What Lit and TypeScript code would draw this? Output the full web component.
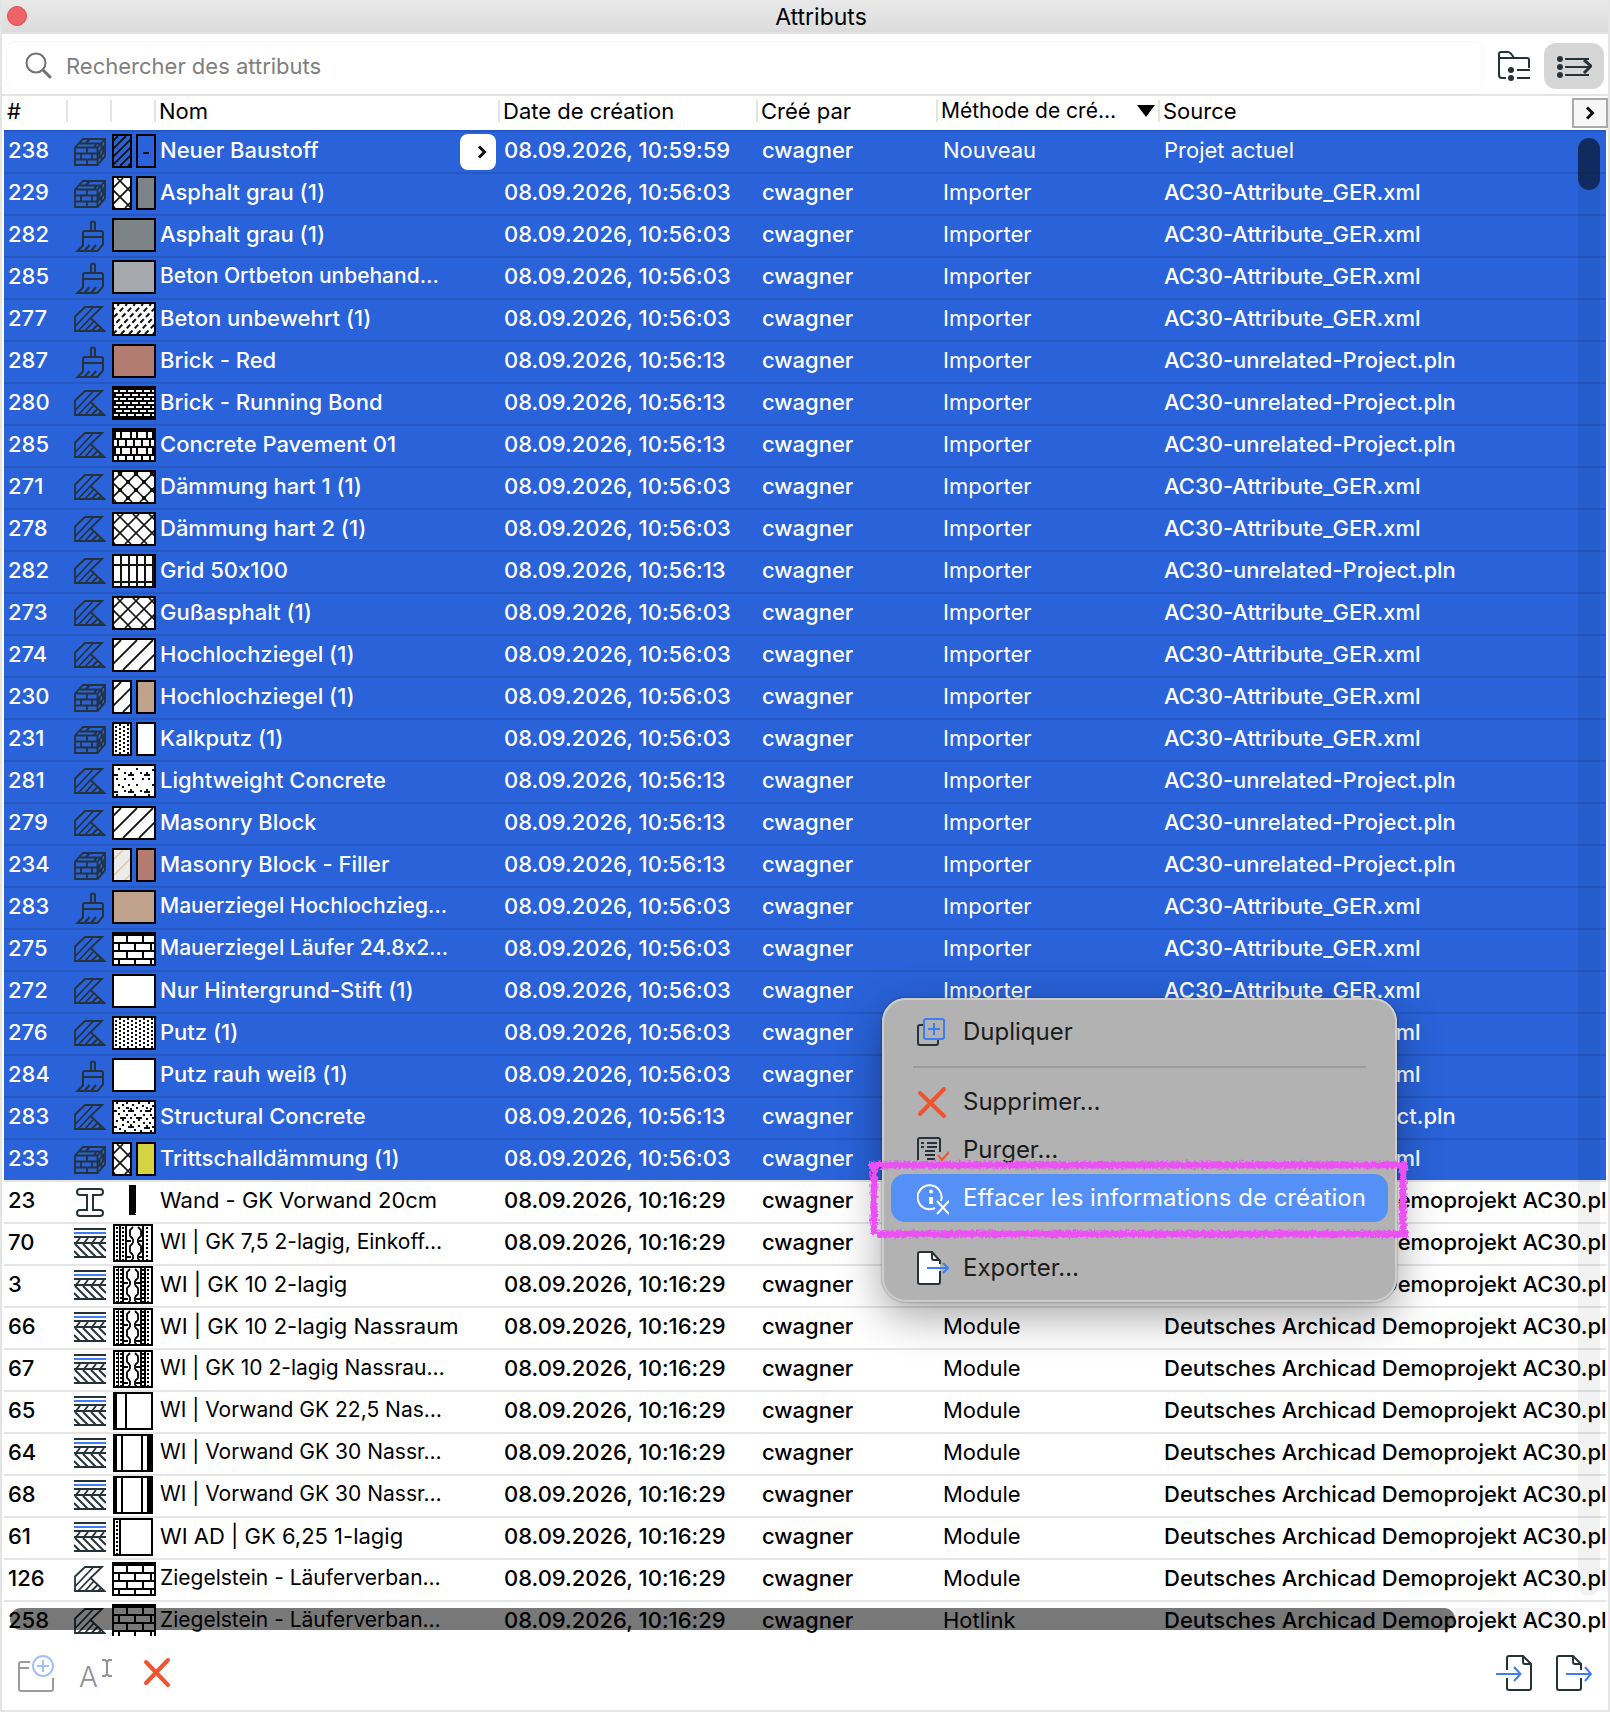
import { LitElement, html, svg, css, nothing } from "lit";
import { customElement, property, state } from "lit/decorators.js";

type Kind = "material" | "surface" | "fill" | "profile" | "composite";

interface Row {
  id: string;
  kind: Kind;
  swatch: string[];
  name: string;
  date: string;
  method: string;
  source: string;
  selected: boolean;
}

const GER = "AC30-Attribute_GER.xml";
const PLN = "AC30-unrelated-Project.pln";
const DEMO = "Deutsches Archicad Demoprojekt AC30.pln";
const T03 = "08.09.2026, 10:56:03";
const T13 = "08.09.2026, 10:56:13";
const T16 = "08.09.2026, 10:16:29";

const imported = (id: string, kind: Kind, swatch: string, name: string, fromProject = false): Row => ({
  id,
  kind,
  swatch: swatch.split(" "),
  name,
  date: fromProject ? T13 : T03,
  method: "Importer",
  source: fromProject ? PLN : GER,
  selected: true,
});

const linked = (id: string, kind: Kind, swatch: string, name: string, method = "Module"): Row => ({
  id,
  kind,
  swatch: [swatch],
  name,
  date: T16,
  method,
  source: DEMO,
  selected: false,
});

const ROWS: Row[] = [
  {
    id: "238",
    kind: "material",
    swatch: ["hatch", "dash"],
    name: "Neuer Baustoff",
    date: "08.09.2026, 10:59:59",
    method: "Nouveau",
    source: "Projet actuel",
    selected: true,
  },
  imported("229", "material", "cross #7d8488", "Asphalt grau (1)"),
  imported("282", "surface", "#7d8488", "Asphalt grau (1)"),
  imported("285", "surface", "#a5a8ad", "Beton Ortbeton unbehand…"),
  imported("277", "fill", "dashes", "Beton unbewehrt (1)"),
  imported("287", "surface", "#b27c70", "Brick - Red", true),
  imported("280", "fill", "running", "Brick - Running Bond", true),
  imported("285", "fill", "pavement", "Concrete Pavement 01", true),
  imported("271", "fill", "crossdot", "Dämmung hart 1 (1)"),
  imported("278", "fill", "cross", "Dämmung hart 2 (1)"),
  imported("282", "fill", "grid", "Grid 50x100", true),
  imported("273", "fill", "cross", "Gußasphalt (1)"),
  imported("274", "fill", "diagonal", "Hochlochziegel (1)"),
  imported("230", "material", "diagonal #c0a28d", "Hochlochziegel (1)"),
  imported("231", "material", "dots #ffffff", "Kalkputz (1)"),
  imported("281", "fill", "light", "Lightweight Concrete", true),
  imported("279", "fill", "diagonal", "Masonry Block", true),
  imported("234", "material", "faint #b27c70", "Masonry Block - Filler", true),
  imported("283", "surface", "#c0a28d", "Mauerziegel Hochlochzieg…"),
  imported("275", "fill", "bricks", "Mauerziegel Läufer 24.8x2…"),
  imported("272", "fill", "#ffffff", "Nur Hintergrund-Stift (1)"),
  imported("276", "fill", "dots", "Putz (1)"),
  imported("284", "surface", "#ffffff", "Putz rauh weiß (1)"),
  imported("283", "fill", "structural", "Structural Concrete", true),
  imported("233", "material", "cross #d3d344", "Trittschalldämmung (1)"),
  linked("23", "profile", "bar", "Wand - GK Vorwand 20cm"),
  linked("70", "composite", "wallA", "WI | GK 7,5 2-lagig, Einkoff…"),
  linked("3", "composite", "wallB", "WI | GK 10 2-lagig"),
  linked("66", "composite", "wallB", "WI | GK 10 2-lagig Nassraum"),
  linked("67", "composite", "wallB", "WI | GK 10 2-lagig Nassrau…"),
  linked("65", "composite", "wallC", "WI | Vorwand GK 22,5 Nas…"),
  linked("64", "composite", "wallD", "WI | Vorwand GK 30 Nassr…"),
  linked("68", "composite", "wallD", "WI | Vorwand GK 30 Nassr…"),
  linked("61", "composite", "wallE", "WI AD | GK 6,25 1-lagig"),
  linked("126", "fill", "bricks", "Ziegelstein - Läuferverban…"),
  linked("258", "fill", "bricks", "Ziegelstein - Läuferverban…", "Hotlink"),
];

/* Diagonals rising to the right: x + y = k */
const rising = (w: number, h: number, start: number, step: number) => {
  let d = "";
  for (let k = start; k < w + h; k += step) d += `M${k - h} ${h}L${k} 0`;
  return d;
};

/* Diagonals falling to the right: x - y = k */
const falling = (w: number, h: number, start: number, step: number) => {
  let d = "";
  for (let k = start; k > -h; k -= step) d += `M${k} 0L${k + h} ${h}`;
  for (let k = start + step; k < w; k += step) d += `M${k} 0L${k + h} ${h}`;
  return d;
};

const blocks = (cells: number[][]) =>
  cells.map(([x, y, w, h]) => `M${x} ${y}h${w}v${h}h${-w}z`).join("");

const dotGrid = (w: number, h: number) => {
  const cells: number[][] = [];
  for (let c = 0, x = 1; x < w; x += 4, c++)
    for (let y = c % 2 ? 0 : 2; y < h; y += 4) cells.push([x, y, 2, 2]);
  return blocks(cells);
};

const runningBond = (w: number, h: number, pw: number, ph: number, gap: number) => {
  const cells: number[][] = [];
  for (let r = 0, y = 2; y < h; y += ph, r++)
    for (let x = r % 2 ? -pw / 2 - 2 : -2; x < w; x += pw)
      cells.push([x, y, pw - gap, ph - 2]);
  return blocks(cells);
};

const pavement = () => {
  const cells: number[][] = [];
  for (let r = 0, y = 2; y < 30; y += 8, r++) {
    if (r % 2 === 0) {
      for (let x = -8; x < 40; x += 16) cells.push([x, y, 8, 6], [x + 10, y, 4, 6]);
    } else {
      for (let x = -3; x < 40; x += 8) cells.push([x, y, 6, 6]);
    }
  }
  return blocks(cells);
};

/* Soft insulation: stacked loops joined by short necks */
const loops = (x: number, top: number) => {
  let d = "";
  for (let y = top; y < 34; y += 16) {
    d += `M${x + 6} ${y}M${x + 11} ${y}l3 3v6l-3 3M${x + 6} ${y + 12}l-3-3v-6l3-3`;
    d += `M${x + 6} ${y + 12}v4M${x + 11} ${y + 12}v4`;
    d += `M${x} ${y + 14}h4M${x + 12} ${y + 14}h4`;
  }
  return d;
};

const dotted = (x: number) =>
  svg`<path d="M${x} 1V34" stroke="#000" stroke-width="2" stroke-dasharray="2 2" fill="none"/>`;

const pattern = (name: string, w: number, h: number) => {
  const paper = svg`<rect width=${w} height=${h} fill="#fff"/>`;
  const ink = svg`<rect width=${w} height=${h} fill="#000"/>`;
  const line = (d: string, width = 1.4, color = "#111") =>
    svg`<path d=${d} fill="none" stroke=${color} stroke-width=${width}/>`;
  const solid = (d: string, color = "#111") =>
    svg`<path d=${d} fill=${color} shape-rendering="crispEdges"/>`;
  const soft = (d: string) =>
    svg`<path d=${d} fill="none" stroke="#000" stroke-width="1.8"/>`;
  switch (name) {
    case "hatch":
      return line(rising(w, h, 4, 8), 1.8);
    case "dash":
      return solid("M5 16h6v2h-6z");
    case "cross":
      return svg`${paper}${line(rising(w, h, 9, 16) + falling(w, h, 3, 16), 1.6)}`;
    case "crossdot": {
      const knots: number[][] = [];
      for (const [ox, oy] of [[6, 2], [14, 10]])
        for (let x = ox; x < w; x += 16)
          for (let y = oy; y < h; y += 16) knots.push([x - 2, y - 2, 4, 4]);
      return svg`${paper}${line(rising(w, h, 8, 16) + falling(w, h, 4, 16), 1.6)}${solid(blocks(knots))}`;
    }
    case "diagonal":
      return svg`${paper}${line(rising(w, h, 7, 16), 1.8)}`;
    case "faint":
      return svg`<rect width=${w} height=${h} fill="#ececec"/>${line(rising(w, h, 9, 16), 1.6, "#e5c9a4")}`;
    case "dashes":
      return svg`${paper}<path d=${rising(w, h, 5, 8)} fill="none" stroke="#111" stroke-width="2" stroke-dasharray="5 3"/>`;
    case "running":
      return svg`${ink}${solid(runningBond(w, h, 8, 4, 2), "#fff")}`;
    case "bricks":
      return svg`${ink}${solid(runningBond(w, h, 16, 8, 2), "#fff")}`;
    case "pavement":
      return svg`${ink}${solid(pavement(), "#fff")}`;
    case "grid":
      return svg`${paper}${solid("M6 0h2v30h-2zM14 0h2v30h-2zM22 0h2v30h-2zM30 0h2v30h-2zM38 0h2v30h-2zM0 8h40v2h-40zM0 25h40v2h-40z")}`;
    case "dots":
      return svg`${paper}${solid(dotGrid(w, h))}`;
    case "light":
      return svg`${paper}${solid(
        blocks([
          [4, 2, 2, 2], [22, 2, 2, 2], [38, 3, 2, 2], [10, 6, 2, 2], [26, 6, 2, 2],
          [0, 8, 4, 2], [14, 8, 6, 2], [16, 6, 2, 2], [30, 8, 6, 2], [32, 6, 2, 2],
          [10, 12, 2, 2], [18, 12, 2, 2], [28, 12, 2, 2], [34, 12, 2, 2], [2, 12, 2, 2],
          [4, 18, 2, 2], [14, 18, 2, 2], [22, 18, 2, 2], [38, 18, 2, 2], [8, 20, 2, 2],
          [0, 25, 4, 2], [14, 25, 6, 2], [16, 23, 2, 2], [30, 25, 6, 2], [32, 23, 2, 2],
          [10, 24, 2, 2], [26, 24, 2, 2], [2, 28, 2, 2], [20, 28, 2, 2], [34, 28, 2, 2],
        ])
      )}`;
    case "structural":
      return svg`${paper}${solid(
        blocks([
          [2, 0, 2, 2], [8, 2, 2, 2], [12, 0, 2, 2], [18, 2, 2, 2], [24, 0, 2, 2], [28, 3, 2, 2], [34, 0, 2, 2], [38, 3, 2, 2],
          [4, 5, 2, 2], [12, 5, 3, 2], [22, 5, 2, 2], [32, 5, 2, 2],
          [0, 8, 3, 2], [14, 8, 6, 2], [16, 6, 2, 2], [9, 8, 2, 2], [26, 8, 2, 2], [31, 8, 6, 2], [36, 6, 2, 2],
          [4, 11, 2, 2], [12, 12, 2, 2], [20, 12, 2, 2], [29, 12, 2, 2], [36, 12, 2, 2],
          [6, 15, 6, 2], [8, 17, 2, 2], [16, 15, 2, 2], [22, 15, 6, 2], [24, 17, 2, 2], [32, 16, 2, 2], [38, 15, 2, 2],
          [2, 18, 2, 2], [13, 19, 2, 2], [19, 19, 2, 2], [29, 20, 2, 2], [35, 20, 2, 2],
          [0, 24, 3, 2], [14, 24, 6, 2], [16, 22, 2, 2], [8, 22, 2, 2], [24, 23, 2, 2], [30, 25, 6, 2], [32, 23, 2, 2], [38, 24, 2, 2],
          [5, 26, 2, 2], [10, 28, 2, 2], [20, 27, 2, 2], [26, 28, 2, 2], [36, 28, 2, 2],
        ])
      )}`;
    case "wallA":
      return svg`${paper}${dotted(2)}${dotted(8)}${dotted(32)}${solid("M4 0h2v34h-2zM10 0h2v34h-2zM27 0h2v34h-2z", "#000")}${soft(loops(12, 1))}`;
    case "wallB":
      return svg`${paper}${dotted(2)}${dotted(6)}${dotted(28)}${dotted(33)}${solid("M3 0h1v34h-1zM7 0h2v34h-2zM25 0h2v34h-2zM29 0h2v34h-2z", "#000")}${soft(loops(9, 1))}`;
    case "wallC":
      return svg`${paper}${solid("M0 0h2v34h-2zM10 0h2v34h-2z", "#000")}`;
    case "wallD":
      return svg`${paper}${solid("M0 0h2v34h-2zM6 0h2v34h-2zM26 0h2v34h-2zM32 0h4v34h-4z", "#000")}`;
    case "wallE":
      return svg`${paper}${dotted(2)}${solid("M4 0h2v34h-2z", "#000")}`;
    default:
      return svg`<rect width=${w} height=${h} fill=${name}/>`;
  }
};

const swatch = (row: Row) => {
  if (row.kind === "profile")
    return html`<svg class="plain" width="44" height="40" viewBox="0 0 44 40" aria-hidden="true">
      <path d="M17 3h7v28h-1v1h1v1h-7z" fill="#000" />
    </svg>`;
  if (row.kind === "composite")
    return html`<span class="swatches"
      ><svg class="swatch wall" width="36" height="34" viewBox="0 0 36 34" aria-hidden="true">
        ${pattern(row.swatch[0], 36, 34)}
      </svg></span
    >`;
  const w = row.swatch.length > 1 ? 16 : 40;
  return html`<span class="swatches"
    >${row.swatch.map(
      (s) => html`<svg class="swatch" width=${w} height="30" viewBox="0 0 ${w} 30" aria-hidden="true">${pattern(s, w, 30)}</svg>`
    )}</span
  >`;
};

/* Type icons share a 32×40 box, the free height of a row */
const kindShape = {
  material: svg`<path stroke-width="1.8" d="M1 15.500 9 7h22v17.500L23.500 33H1zM1 15.500h22.500V33M23.500 15.500 31 7M1 21.500h22.500L31 13M1 27.500h22.500L31 19M13 15.500v6M7 21.500v6M18 21.500v6M13 27.500V33M5.500 11.500h21M16 7l-4 4M23 11.500l-3.500 4M27.500 11.500v6M25.500 19v6M29 15.500v5.500M27.500 23v5"/>`,
  surface: svg`<path d="M17 15V7.500a2 2 0 0 1 4 0V15M9 21v-4a2 2 0 0 1 2-2h16a2 2 0 0 1 2 2v11.500L23.500 35H3.500L9 29.500zM9 21h20M10.500 35l5-6M17 35l5-6"/>`,
  fill: svg`<path stroke-width="1.800" d="M1 31V16.500L11 7h17L16.500 18 30.500 31zM1 26.500 19.500 7M4 31l12.500-13M11 31l8.500-9.500M17.500 31l6-6M24 31l3-3"/>`,
  profile: svg`<path d="M6 7h20a3 3 0 0 1 0 6h-7v15h7a3 3 0 0 1 0 6H6a3 3 0 0 1 0-6h7V13H6a3 3 0 0 1 0-6z"/>`,
  composite: svg`<path d="M0 5h32M0 13h32M0 19h32M0 33h32M2 19l4-5M10 19l4-5M18 19l4-5M26 19l4-5M1 20l13 13M9 20l13 13M17 20l13 13M25 20l7 7M0 27l6 6"/><path d="M0 9h32" stroke="#3f7bf2"/>`,
};

const kindLabel: Record<Kind, string> = {
  material: "Matériau de construction",
  surface: "Surface",
  fill: "Hachure",
  profile: "Profil",
  composite: "Composite",
};

const chevron = html`<svg width="10" height="14" viewBox="0 0 10 14" aria-hidden="true">
  <path d="m2 1.500 5.500 5.500L2 12.500" fill="none" stroke="#111" stroke-width="3" />
</svg>`;

const crossIcon = svg`<path d="m2 5 22 23M24 3 2 26" stroke="#f0532d" stroke-width="4" stroke-linecap="round"/>`;

@customElement("attr-context-menu")
class AttrContextMenu extends LitElement {
  static styles = css`
    :host {
      display: block;
      box-sizing: border-box;
      padding: 10px 9px;
      border-radius: 24px;
      background: #b2b2b2;
      box-shadow:
        inset 0 0 0 2px #cdcdcd,
        0 0 2px rgba(0, 0, 0, 0.5),
        0 14px 44px rgba(0, 0, 0, 0.36);
    }
    .item {
      display: flex;
      align-items: center;
      gap: 14px;
      width: 100%;
      height: 48px;
      padding: 0 0 0 26px;
      border: 0;
      border-radius: 14px;
      background: none;
      color: #1c1c1c;
      font: 400 24px/28px Inter, "Liberation Sans", sans-serif;
      text-align: left;
      white-space: nowrap;
    }
    .item svg {
      flex: none;
    }
    .active {
      background: #5590f6;
      color: #fff;
    }
    .rule {
      height: 2px;
      margin: 10px 22px;
      border: 0;
      background: #9c9c9c;
    }
    .gap {
      height: 22px;
    }
  `;

  render() {
    const box = (shape: unknown) =>
      html`<svg width="32" height="36" viewBox="0 0 32 36" fill="none" stroke="#26323a" stroke-width="2" aria-hidden="true">${shape}</svg>`;
    return html`
      <button class="item" role="menuitem">
        ${box(svg`<path d="M6 11H3a2 2 0 0 0-2 2v16a2 2 0 0 0 2 2h16a2 2 0 0 0 2-2v-3"/><g stroke="#3f7bf2"><rect x="7" y="5" width="20" height="20" rx="2"/><path d="M11 15h12M17 9v12"/></g>`)}
        Dupliquer
      </button>
      <hr class="rule" />
      <button class="item" role="menuitem">
        ${box(svg`<path d="m3 9 24 23M27 5 3 30" stroke="#f0532d" stroke-width="4" stroke-linecap="round"/>`)}
        Supprimer…
      </button>
      <button class="item" role="menuitem">
        ${box(svg`<path d="M1 28V8a2 2 0 0 1 2-2h18a2 2 0 0 1 2 2v12M4 11h3M10 11h10M4 15h3M10 15h10M8 19h10M8 23h10M10 27h8"/><path d="m21 23 4 5 7-8" stroke="#f0532d"/>`)}
        Purger…
      </button>
      <button class="item active" role="menuitem">
        ${box(svg`<g stroke="#fff"><path d="M24 21A12 12 0 1 0 18 28"/><circle cx="14" cy="11.500" r="1" fill="#fff"/><path d="M14 17v7" stroke-width="4"/><path d="m20 21 12 13M32 21 20 34"/></g>`)}
        Effacer les informations de création
      </button>
      <div class="gap"></div>
      <button class="item" role="menuitem">
        ${box(svg`<path d="M23 14V11l-8-9H3a2 2 0 0 0-2 2v28a2 2 0 0 0 2 2h18a2 2 0 0 0 2-2V21" fill="#fff"/><path d="M15 2v6a2 2 0 0 0 2 2h6"/><path d="M10 18h21M26 13l5 5-5 5" stroke="#3f7bf2"/>`)}
        Exporter…
      </button>
    `;
  }
}

@customElement("attr-table")
class AttrTable extends LitElement {
  @property({ attribute: false }) rows: Row[] = [];

  static styles = css`
    :host {
      display: block;
      min-height: 0;
      overflow: hidden;
      position: relative;
      background: #fff;
      color: #000;
      font: 400 22px/36px Inter, "Liberation Sans", sans-serif;
      font-feature-settings: "calt" 0;
    }
    .frame {
      height: 100%;
      margin: 0 2px;
      overflow: hidden;
    }
    table {
      width: 100%;
      border-collapse: separate;
      border-spacing: 0;
      table-layout: fixed;
    }
    .c-id { width: 64px; }
    .c-kind { width: 44px; }
    .c-swatch { width: 44px; }
    .c-name { width: 344px; }
    .c-date { width: 258px; }
    .c-by { width: 180px; }
    .c-method { width: 222px; }
    th {
      height: 34px;
      padding: 0;
      border-bottom: 2px solid #2458c4;
      font-weight: 400;
      text-align: left;
    }
    .head {
      display: flex;
      align-items: center;
      justify-content: space-between;
      box-sizing: border-box;
      width: 100%;
      height: 22px;
      margin: 2px 0 6px;
      padding: 0 3px;
      border: 0;
      border-right: 2px solid #e4e4e4;
      background: none;
      color: inherit;
      font: inherit;
      line-height: 22px;
      white-space: nowrap;
    }
    .head.last {
      border-right: 0;
    }
    .head.cut,
    .cut {
      font-size: 21px;
    }
    td {
      height: 40px;
      padding: 0 0 0 4px;
      border-bottom: 2px solid #e4e4e4;
      overflow: hidden;
      vertical-align: top;
      white-space: nowrap;
      font-weight: 500;
    }
    td.name {
      font-weight: 400;
    }
    .selected td {
      border-color: #2558c3;
      background: #2962d9;
      color: #fff;
      font-weight: 500;
    }
    .edge td {
      border-color: #e4e4e4;
    }
    td.kind {
      padding: 0 0 0 6px;
    }
    td.sample {
      padding: 0;
    }
    td.method {
      padding-left: 5px;
    }
    tr td.method,
    .fresh td.source {
      font-weight: 400;
    }
    .kind svg,
    .plain {
      display: block;
    }
    .swatches {
      display: flex;
      gap: 4px;
    }
    .swatch {
      flex: none;
      margin-top: 2px;
      border: 2px solid #000;
    }
    .wall {
      margin: 0 0 0 1px;
    }
    .name-line {
      display: flex;
      justify-content: space-between;
      align-items: flex-start;
    }
    .open {
      display: flex;
      align-items: center;
      justify-content: flex-end;
      width: 36px;
      height: 36px;
      margin: 2px 4px 0 0;
      padding: 0 9px 0 0;
      border: 0;
      border-radius: 8px;
      background: #fff;
    }
    .more {
      position: absolute;
      top: 2px;
      right: 0;
      display: flex;
      align-items: center;
      justify-content: center;
      width: 36px;
      height: 30px;
      padding: 0;
      border: 2px solid #aaa;
      background: #f7f7f7;
    }
    .track,
    .thumb {
      position: absolute;
      border-radius: 11px;
      background: rgba(0, 0, 0, 0.05);
    }
    .thumb {
      background: rgba(0, 0, 0, 0.53);
    }
    .track.v {
      top: 42px;
      right: 8px;
      bottom: 40px;
      width: 22px;
    }
    .thumb.v {
      top: 42px;
      right: 8px;
      width: 22px;
      height: 52px;
    }
    .thumb.h {
      left: 8px;
      right: 153px;
      bottom: 6px;
      height: 22px;
    }
    .track.rest {
      right: 44px;
      bottom: 6px;
      width: 109px;
      height: 22px;
      border-radius: 0 11px 11px 0;
    }
  `;

  private row(r: Row, i: number) {
    const next = this.rows[i + 1];
    const cls = [r.selected ? "selected" : "", r.selected && next && !next.selected ? "edge" : "", i === 0 ? "fresh" : ""].join(" ");
    return html`<tr class=${cls} aria-selected=${r.selected ? "true" : "false"}>
      <td>${r.id}</td>
      <td class="kind">
        <svg width="32" height="40" viewBox="0 0 32 40" fill="none" stroke="#26323a" stroke-width="2" role="img" aria-label=${kindLabel[r.kind]}>
          ${kindShape[r.kind]}
        </svg>
      </td>
      <td class="sample">${swatch(r)}</td>
      <td class="name">
        <div class="name-line">
          <span class=${r.name.endsWith("…") ? "cut" : ""}>${r.name}</span>
          ${i === 0 ? html`<button class="open" aria-label="Ouvrir">${chevron}</button>` : nothing}
        </div>
      </td>
      <td>${r.date}</td>
      <td>cwagner</td>
      <td class="method">${r.method}</td>
      <td class="source">${r.source}</td>
    </tr>`;
  }

  render() {
    return html`
      <div class="frame">
        <table>
          <colgroup>
            <col class="c-id" /><col class="c-kind" /><col class="c-swatch" /><col class="c-name" />
            <col class="c-date" /><col class="c-by" /><col class="c-method" /><col />
          </colgroup>
          <thead>
            <tr>
              <th><button class="head">#</button></th>
              <th><span class="head"></span></th>
              <th><span class="head"></span></th>
              <th><button class="head">Nom</button></th>
              <th><button class="head">Date de création</button></th>
              <th><button class="head">Créé par</button></th>
              <th aria-sort="descending">
                <button class="head cut">
                  Méthode de cré…
                  <svg width="18" height="12" viewBox="0 0 18 12" aria-hidden="true"><path d="M0 0h18L9 12z" /></svg>
                </button>
              </th>
              <th><button class="head last">Source</button></th>
            </tr>
          </thead>
          <tbody>
            ${this.rows.map((r, i) => this.row(r, i))}
          </tbody>
        </table>
      </div>
      <button class="more" aria-label="Colonnes">${chevron}</button>
      <div class="track v"></div>
      <div class="thumb v"></div>
      <div class="track rest"></div>
      <div class="thumb h"></div>
    `;
  }
}

@customElement("app-root")
class AppRoot extends LitElement {
  @state() private rows = ROWS;

  static styles = css`
    :host {
      position: relative;
      display: flex;
      flex-direction: column;
      box-sizing: border-box;
      height: 100vh;
      border: 2px solid #e4e4e4;
      border-top: 0;
      background: #fff;
      overflow: hidden;
      font: 400 22px/28px Inter, "Liberation Sans", sans-serif;
    }
    .title {
      display: grid;
      grid-template-columns: 1fr auto 1fr;
      align-items: end;
      box-sizing: border-box;
      height: 34px;
      border-bottom: 2px solid #e2e2e2;
      background: linear-gradient(#e9e9e9, #dcdcdc);
      color: #000;
    }
    .title h1 {
      margin: 0 0 0 32px;
      font: inherit;
      font-size: 23px;
      line-height: 30px;
    }
    .close {
      width: 20px;
      height: 20px;
      margin: 0 0 6px 5px;
      padding: 0;
      border: 1px solid #e2484a;
      border-radius: 50%;
      background: #ef6567;
    }
    .search {
      display: flex;
      align-items: center;
      box-sizing: border-box;
      height: 62px;
      padding: 4px 4px 0;
      border-bottom: 2px solid #e4e4e4;
    }
    .field {
      display: flex;
      flex: 1;
      align-items: center;
      gap: 13px;
      height: 48px;
      padding-left: 18px;
      border: 1px solid #f7f7f7;
      border-radius: 10px;
    }
    .field input {
      flex: 1;
      min-width: 0;
      padding: 0;
      border: 0;
      outline: 0;
      background: none;
      font: inherit;
    }
    .field input::placeholder {
      color: #808080;
      opacity: 1;
    }
    .tool {
      display: flex;
      align-items: center;
      justify-content: center;
      width: 60px;
      height: 46px;
      padding: 0;
      border: 0;
      border-radius: 12px;
      background: none;
    }
    .tool.on {
      background: #d6d6d6;
    }
    attr-table {
      flex: 1;
    }
    .bottom {
      display: flex;
      align-items: center;
      gap: 24px;
      height: 74px;
      padding: 0 16px;
    }
    .bottom button {
      display: flex;
      padding: 0;
      border: 0;
      background: none;
    }
    .spacer {
      flex: 1;
    }
    .menu {
      position: absolute;
      top: 998px;
      left: 880px;
      width: 515px;
    }
    .marker {
      position: absolute;
      top: 1154px;
      left: 862px;
      pointer-events: none;
    }
  `;

  render() {
    return html`
      <header class="title">
        <button class="close" aria-label="Fermer"></button>
        <h1>Attributs</h1>
      </header>
      <div class="search">
        <label class="field">
          <svg width="28" height="30" viewBox="0 0 28 30" fill="none" stroke="#707070" stroke-width="2" aria-hidden="true">
            <circle cx="11" cy="12" r="9.500" />
            <path d="m18 19 7 7" stroke-width="3" stroke-linecap="round" />
          </svg>
          <input type="search" placeholder="Rechercher des attributs" aria-label="Rechercher des attributs" />
        </label>
        <button class="tool" aria-label="Affichage par dossiers">
          <svg width="32" height="32" viewBox="0 0 32 32" fill="none" stroke="#26323a" stroke-width="2" aria-hidden="true">
            <path d="M8 28H4a3 3 0 0 1-3-3V4a2 2 0 0 1 2-2h7c2 0 3 1 6 6h13a2 2 0 0 1 2 2v8M1 8h15M19 20h13M19 28h13" />
            <g fill="#26323a" stroke="none"><circle cx="13" cy="20" r="3" /><circle cx="13" cy="28" r="3" /></g>
          </svg>
        </button>
        <button class="tool on" aria-label="Affichage en liste" aria-pressed="true">
          <svg width="36" height="24" viewBox="0 0 36 24" fill="none" stroke="#26323a" stroke-width="2" aria-hidden="true">
            <path d="M9 5h24M9 13h25M9 21h24" />
            <path d="m28 6 7 6-7 7" stroke-width="3" />
            <g fill="#26323a" stroke="none"><circle cx="4" cy="5" r="3" /><circle cx="4" cy="13" r="3" /><circle cx="4" cy="21" r="3" /></g>
          </svg>
        </button>
      </div>
      <attr-table .rows=${this.rows}></attr-table>
      <footer class="bottom">
        <button aria-label="Nouveau dossier">
          <svg width="36" height="38" viewBox="0 0 36 38" fill="none" stroke="#999d9f" stroke-width="2" aria-hidden="true">
            <path d="M12 8H3a2 2 0 0 0-2 2v25a2 2 0 0 0 2 2h30a2 2 0 0 0 2-2V24M1 14h10" />
            <g stroke="#a3c0fb"><circle cx="25" cy="12" r="10" /><path d="M19 12h12M25 6v12" /></g>
          </svg>
        </button>
        <button aria-label="Renommer">
          <svg width="36" height="44" viewBox="0 -3 36 44" aria-hidden="true">
            <text x="1" y="33" fill="#8d9193" font-family="Inter, sans-serif" font-size="28" font-weight="300">A</text>
            <path d="M24 6h3l2 2 2-2h3M29 8v12M24 22h3l2-2 2 2h3" fill="none" stroke="#8d9193" stroke-width="2" />
          </svg>
        </button>
        <button aria-label="Supprimer">
          <svg width="44" height="32" viewBox="-6 0 44 32" fill="none" aria-hidden="true">${crossIcon}</svg>
        </button>
        <span class="spacer"></span>
        <button aria-label="Importer">
          <svg width="36" height="38" viewBox="0 0 36 38" fill="none" stroke="#26323a" stroke-width="2" aria-hidden="true">
            <path d="M11 16V4a2 2 0 0 1 2-2h14l8 8v24a2 2 0 0 1-2 2H13a2 2 0 0 1-2-2V24M27 2v6a2 2 0 0 0 2 2h6" />
            <path d="M0 20h24M18 13l6.500 7-6.500 7" stroke="#3f7bf2" />
          </svg>
        </button>
        <button aria-label="Exporter">
          <svg width="36" height="38" viewBox="0 0 36 38" fill="none" stroke="#26323a" stroke-width="2" aria-hidden="true">
            <path d="M25 16v-6l-8-8H3a2 2 0 0 0-2 2v30a2 2 0 0 0 2 2h20a2 2 0 0 0 2-2V24M17 2v6a2 2 0 0 0 2 2h6" />
            <path d="M10 20h25M29 13l6 7-6 7" stroke="#3f7bf2" />
          </svg>
        </button>
      </footer>
      <attr-context-menu class="menu" role="menu"></attr-context-menu>
      <svg class="marker" width="550" height="90" viewBox="0 0 550 90" aria-hidden="true">
        <filter id="crayon" x="-5%" y="-10%" width="110%" height="120%">
          <feTurbulence type="fractalNoise" baseFrequency="0.4" numOctaves="2" seed="4" result="n" />
          <feDisplacementMap in="SourceGraphic" in2="n" scale="6" xChannelSelector="R" yChannelSelector="G" />
        </filter>
        <path d="M5 11H544M539 8V82M544 80H12M10 80V8" fill="none" stroke="#ec4ff3" stroke-width="7" filter="url(#crayon)" />
      </svg>
    `;
  }
}
